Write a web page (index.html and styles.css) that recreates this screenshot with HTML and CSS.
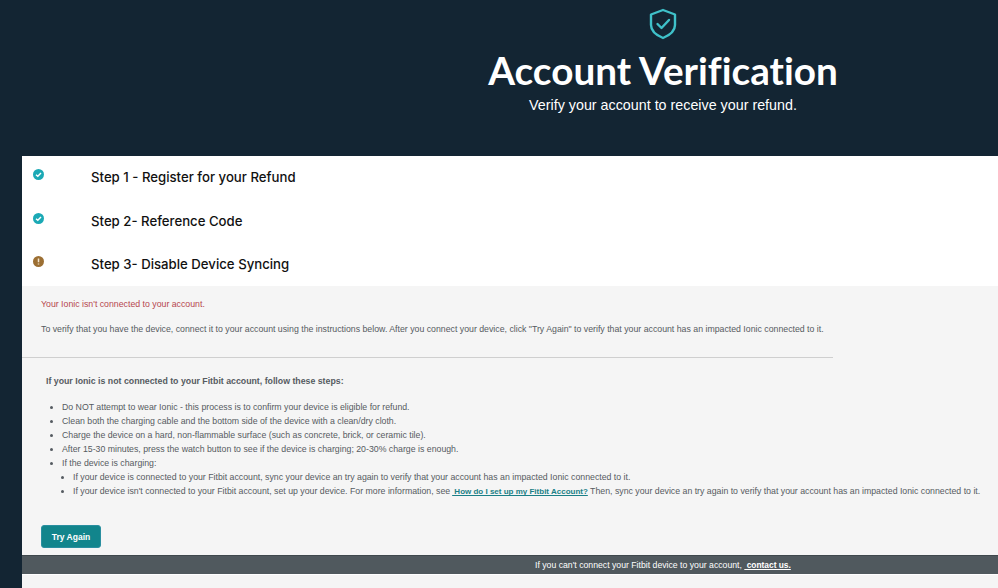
FILE: index.html
```html
<!DOCTYPE html>
<html lang="en">
<head>
  <meta charset="UTF-8" />
  <meta name="viewport" content="width=device-width, initial-scale=1.0" />
  <title>Account Verification</title>
  <link rel="stylesheet" href="styles.css">
</head>
<body>
  <header class="hero">
    <svg class="hero-icon" width="28" height="32" viewBox="0 0 28 32" fill="none" stroke="#3fc1c9" stroke-width="2.4">
      <path d="M14 2 L26 6.5 V17 C26 23 20 27.5 14 30 C8 27.5 2 23 2 17 V6.5 Z" stroke-linejoin="round" />
      <path d="M8.5 16 L12.5 20 L20 12" stroke-linecap="round" stroke-linejoin="round" />
    </svg>
    <h1>Account Verification</h1>
    <p>Verify your account to receive your refund.</p>
  </header>

  <main class="content">
    <div class="step">
      <svg class="step-icon" width="11" height="11" viewBox="0 0 11 11">
        <circle cx="5.5" cy="5.5" r="5.5" fill="#1ba9b5" />
        <path d="M3 5.7 L4.8 7.3 L8 3.9" fill="none" stroke="#fff" stroke-width="1.4" />
      </svg>
      <h3>Step 1 - Register for your Refund</h3>
    </div>
    <div class="step">
      <svg class="step-icon" width="11" height="11" viewBox="0 0 11 11">
        <circle cx="5.5" cy="5.5" r="5.5" fill="#1ba9b5" />
        <path d="M3 5.7 L4.8 7.3 L8 3.9" fill="none" stroke="#fff" stroke-width="1.4" />
      </svg>
      <h3>Step 2- Reference Code</h3>
    </div>
    <div class="step">
      <svg class="step-icon" width="11" height="11" viewBox="0 0 11 11">
        <circle cx="5.5" cy="5.5" r="5.5" fill="#9c6f33" />
        <path d="M5.5 2.5 V6.2 M5.5 7.4 V8.6" fill="none" stroke="#f3e6d0" stroke-width="1.5" />
      </svg>
      <h3>Step 3- Disable Device Syncing</h3>
    </div>

    <section class="panel">
      <div class="notice">
        <p class="error">Your Ionic isn't connected to your account.</p>
        <p>To verify that you have the device, connect it to your account using the instructions below. After you connect your device, click "Try Again" to verify that your account has an impacted Ionic connected to it.</p>
      </div>
      <hr class="divider">
      <div class="instructions">
        <p class="instructions-title">If your Ionic is not connected to your Fitbit account, follow these steps:</p>
        <ul>
          <li>Do NOT attempt to wear Ionic - this process is to confirm your device is eligible for refund.</li>
          <li>Clean both the charging cable and the bottom side of the device with a clean/dry cloth.</li>
          <li>Charge the device on a hard, non-flammable surface (such as concrete, brick, or ceramic tile).</li>
          <li>After 15-30 minutes, press the watch button to see if the device is charging; 20-30% charge is enough.</li>
          <li>If the device is charging:
            <ul>
              <li>If your device is connected to your Fitbit account, sync your device an try again to verify that your account has an impacted Ionic connected to it.</li>
              <li>If your device isn't connected to your Fitbit account, set up your device. For more information, see<a href="#"> How do I set up my Fitbit Account?</a> Then, sync your device an try again to verify that your account has an impacted Ionic connected to it.</li>
            </ul>
          </li>
        </ul>
      </div>
      <button class="btn">Try Again</button>
    </section>

    <div class="contact-bar">
      <span>If you can't connect your Fitbit device to your account, <a href="#">&nbsp;contact us.</a></span>
    </div>
    <div class="footer-space"></div>
  </main>
</body>
</html>
```

FILE: styles.css
```css
html, body {
  height: 100%;
}

body {
  font-family: "Liberation Sans", Arial, sans-serif;
  background-color: #132533;
  margin: 0;
  overflow: hidden;
}

.hero {
  height: 156px;
  box-sizing: border-box;
  padding: 8px 0 0 328px;
  display: flex;
  flex-direction: column;
  align-items: center;
  color: #fff;
}

.hero-icon {
  display: block;
}

.hero h1 {
  font-family: Lato, sans-serif;
  font-size: 38.7px;
  font-weight: 700;
  font-variant-ligatures: none;
  line-height: 50px;
  margin: 5px 0 1px;
}

.hero p {
  font-size: 14.3px;
  line-height: 18px;
  margin: 0;
}

.content {
  margin-left: 22px;
  background-color: #fff;
}

.step {
  height: 43.4px;
  display: flex;
  align-items: center;
  padding-left: 10.5px;
}

.step-icon {
  flex: none;
  margin: -6px 47.5px 0 0;
}

.step h3 {
  font-family: Inter, sans-serif;
  font-size: 13.2px;
  font-weight: 500;
  color: #111;
  margin: -1px 0 0;
}

.panel {
  background-color: #f5f5f5;
  height: 269px;
  box-sizing: border-box;
  padding-top: 13px;
  font-size: 8.75px;
  color: #555b61;
}

.notice {
  padding-left: 19px;
}

.notice p {
  margin: 0 0 15px;
  line-height: 10px;
}

.notice .error {
  color: #b5474f;
}

.divider {
  width: 811px;
  margin: 23px 0 0;
  border: none;
  border-top: 1px solid #cfcfcf;
}

.instructions {
  padding-left: 24px;
}

.instructions-title {
  font-weight: bold;
  font-size: 8.77px;
  margin: 17px 0 0;
  line-height: 12px;
}

.instructions ul {
  margin: 0;
  padding-left: 16px;
  line-height: 14px;
  list-style: disc;
}

.instructions > ul {
  margin-top: 13px;
}

.instructions ul ul {
  padding-left: 11px;
}

.instructions a {
  color: #1a7f86;
  font-size: 8px;
  font-weight: bold;
  margin-left: 2px;
}

.btn {
  display: block;
  background-color: #12858c;
  color: #fff;
  font-family: "Liberation Sans", Arial, sans-serif;
  font-size: 8.5px;
  font-weight: bold;
  width: 60px;
  height: 23px;
  border: 1px solid #2a8fa0;
  border-radius: 3px;
  margin: 26px 0 0 19px;
  padding: 0;
}

.contact-bar {
  background-color: #50595e;
  height: 19px;
  border-top: 1px solid #3f484d;
  box-sizing: border-box;
  padding-left: 513px;
  color: #fff;
  font-size: 8.7px;
  line-height: 19px;
}

.contact-bar a {
  color: #fff;
  font-size: 8.4px;
  font-weight: bold;
}

.footer-space {
  background-color: #f5f5f5;
  height: 15px;
  margin-top: 1px;
}
```
